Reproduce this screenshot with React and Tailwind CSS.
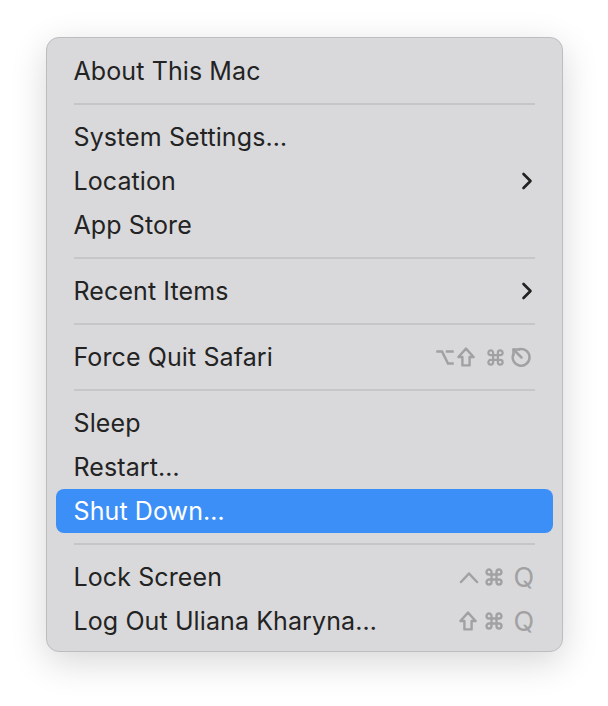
import React from "react";

const G = "#a1a1a3";

function Opt() {
  return (
    <svg width="18" height="17" viewBox="0 0 18 17" fill="none" stroke={G} strokeWidth="2.5" strokeLinecap="square">
      <path d="M1.5 2.5H6L12 14.5H16.5" />
      <path d="M11 2.5H16.5" />
    </svg>
  );
}
function Shift({ w = 18 }) {
  return (
    <svg width={w} height="20" viewBox="0 0 18 20" fill="none" stroke={G} strokeWidth="2.4" strokeLinejoin="round">
      <path d="M9 1.6L16.6 10H12.6V18.4H5.4V10H1.4Z" />
    </svg>
  );
}
function Cmd({ w = 19 }) {
  return (
    <svg width={w} height={w} viewBox="0 0 24 24" fill="none" stroke={G} strokeWidth="2.8" strokeLinecap="round" strokeLinejoin="round">
      <path d="M15 6v12a3 3 0 1 0 3-3H6a3 3 0 1 0 3 3V6a3 3 0 1 0-3 3h12a3 3 0 1 0-3-3" />
    </svg>
  );
}
function Esc() {
  return (
    <svg width="24" height="21" viewBox="0 0 24 21" fill="none" stroke={G} strokeWidth="2.5" strokeLinecap="round" strokeLinejoin="round">
      <path d="M10 2.2A8.4 8.4 0 1 1 4.2 7.5" />
      <path d="M12.5 10.5L4.5 2.5" />
      <path d="M4.5 8V2.5H10" />
    </svg>
  );
}
function Caret() {
  return (
    <svg width="20" height="13" viewBox="0 0 20 13" fill="none" stroke={G} strokeWidth="2.5" strokeLinecap="round" strokeLinejoin="round">
      <path d="M2 11L10 2.5L18 11" />
    </svg>
  );
}
function Q() {
  return <span className="w-[19px] text-center text-[27px] leading-none text-[#a1a1a3]">Q</span>;
}
function Chevron() {
  return (
    <svg width="12" height="18" viewBox="0 0 12 18" fill="none" stroke="#222" strokeWidth="2.6" strokeLinecap="round" strokeLinejoin="round">
      <path d="M2.5 2L9.5 9L2.5 16" />
    </svg>
  );
}

function Row({ label, right, active }) {
  return (
    <div
      className={
        "flex h-[44px] items-center justify-between rounded-[8px] pl-[18px] pr-[20px] " +
        (active ? "bg-[#3d8ff8] text-white" : "text-[#232323]")
      }
    >
      <span className="pt-[2px]">{label}</span>
      {right}
    </div>
  );
}

function Sep() {
  return (
    <div className="flex h-[22px] items-center px-[18px]">
      <div className="h-[2px] w-full bg-[#c6c6c8]" />
    </div>
  );
}

export default function App() {
  return (
    <div className="flex h-[706px] w-[608px] items-start justify-center overflow-hidden bg-white pt-[37px]" style={{ fontFamily: "Inter, 'Noto Sans', sans-serif" }}>
      <div className="w-[517px] rounded-[13px] border border-[#bdbdbf] bg-[#d9d9db] px-[9px] pb-[8px] pt-[11px] text-[25px] tracking-[0.1px] shadow-[0_10px_36px_rgba(0,0,0,0.16)]">
        <Row label="About This Mac" />
        <Sep />
        <Row label="System Settings…" />
        <Row label="Location" right={<Chevron />} />
        <Row label="App Store" />
        <Sep />
        <Row label="Recent Items" right={<Chevron />} />
        <Sep />
        <Row
          label="Force Quit Safari"
          right={
            <div className="flex items-center">
              <Opt />
              <div className="w-[3px]" />
              <Shift />
              <div className="w-[11px]" />
              <Cmd />
              <div className="w-[4px]" />
              <Esc />
            </div>
          }
        />
        <Sep />
        <Row label="Sleep" />
        <Row label="Restart…" />
        <Row label="Shut Down…" active />
        <Sep />
        <Row
          label="Lock Screen"
          right={
            <div className="flex items-center">
              <Caret />
              <div className="w-[5px]" />
              <Cmd w={20} />
              <div className="w-[10px]" />
              <Q />
            </div>
          }
        />
        <Row
          label="Log Out Uliana Kharyna…"
          right={
            <div className="flex items-center">
              <Shift w={20} />
              <div className="w-[6px]" />
              <Cmd w={20} />
              <div className="w-[10px]" />
              <Q />
            </div>
          }
        />
      </div>
    </div>
  );
}
